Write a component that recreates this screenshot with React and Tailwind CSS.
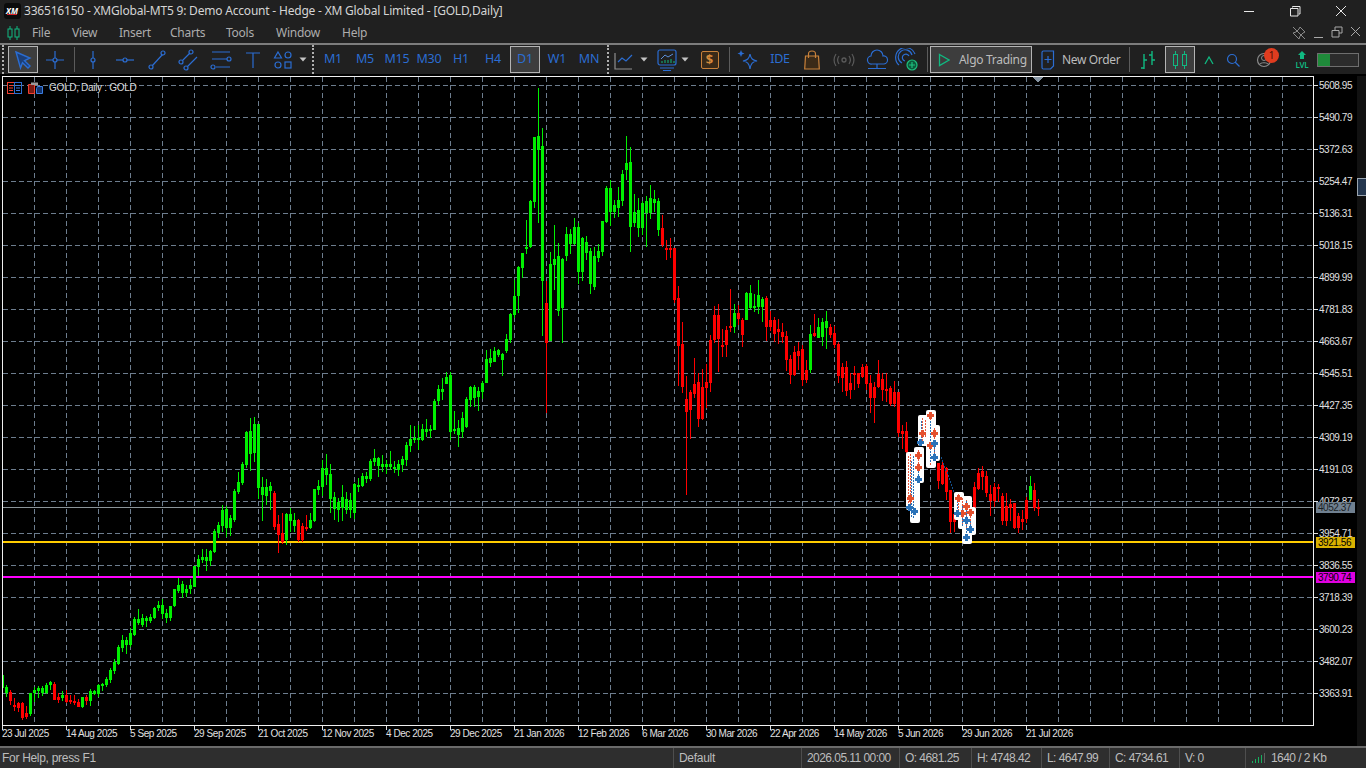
import React from "react";

const Z10 = "g825,825,865,865 g855,862,880,892 r870,876,904,915 r895,915,922,933 r905,910,923,937 r905,908,954,960 r918,940,951,957 g880,880,942,948 g862,870,880,905 g857,864,874,893 g858,864,879,888 g850,855,880,882 g843,846,856,870 r846,852,900,900 r880,892,900,910 g873,885,895,902 r870,885,906,910 r885,900,906,912 r885,904,910,916 r897,905,920,922 g890,892,921,924 r885,891,904,915 g868,874,903,918 g870,873,882,885 g853,855,881,892 g850,853,856,873 g830,836,856,862 g805,810,840,850 g778,786,813,822 g735,741,793,796 g705,720,745,755 g712,720,736,762 g685,699,736,740 g652,657,705,707 g628,657,669,675 g643,654,674,680 g648,654,663,682 g643,652,664,668 g620,624,654,658 g604,615,625,633 g597,615,642,656 g628,639,654,668 g617,618,654,662 g567,567,618,620 g533,555,574,578 g543,552,578,593 g555,568,580,592 g537,555,568,582 g497,498,560,562 g465,477,500,527 g447,471,481,490 g447,471,484,513 g450,453,483,497 g388,393,457,459 g367,375,400,413 g316,330,378,396 g318,327,384,410 g346,354,384,407 g268,273,360,366 g216,246,276,283 g187,192,249,256 g94,96,196,205 g55,93,162,212 g52,72,158,186 g72,72,264,298 g232,261,285,362 g237,261,287,315 g247,258,274,330 r274,279,381,390 r345,372,405,458 r339,399,426,431 g340,342,420,434 g324,342,362,395 g339,360,378,397 r357,360,420,425 r370,378,420,425 r345,381,387,392 g338,360,384,387 g267,267,363,365 g240,258,270,285 g181,204,260,287 g162,204,225,255 g192,222,296,340 g276,291,327,360 g295,306,330,365";
const R1 = "g485,497,508,521 g492,499,510,514 g493,500,510,518 g483,484,513,519";
const Z11 = "g895,915,917,935 g880,888,918,920 g875,888,896,910 g838,843,898,903 g808,835,846,858 g830,833,858,890 g825,852,862,875 g840,853,862,882 g813,853,862,870 g843,862,868,880 g840,852,870,887 g828,837,855,875 g785,795,840,857 g735,777,798,815 g738,773,780,790 g735,773,778,810 g733,748,780,782 g717,747,756,772 g735,747,753,775 g657,663,750,750 g615,627,663,675 g595,627,636,660 g577,591,612,612 g575,585,756,780 g693,747,753,762 g720,744,765,800 g697,714,756,773 g652,657,741,745 g618,620,660,680 g615,620,654,680 g622,633,651,693 g603,609,636,657 g510,537,609,609 g507,534,549,561 g501,513,546,546 g507,510,525,530 g520,522,540,588 g462,477,513,520 g400,402,481,490 g300,348,405,415 g258,261,348,400 g219,219,264,295 g120,200,207,222 g60,63,200,203";
const R2 = "g137,137,202,208 g88,136,150,223 g128,146,281,336 r281,303,343,413 g252,264,341,341 g225,259,265,290 g243,256,311,316 g258,259,308,343 g227,234,256,261 g229,234,244,254 g218,227,244,245 g223,227,272,284 g237,238,272,281 g236,242,253,260 g248,251,284,294 g247,256,287,290 g244,251,258,262 g221,221,252,256 g186,188,222,223 g180,188,212,226 g200,205,212,218 g187,200,208,217 g170,174,201,206 g136,163,170,180 g147,162,227,252 g194,212,223,227 g198,210,228,237 g201,203,228,235 g196,201,213,247 g185,198,213,219 g190,199,203,212 g198,201,230,236 r215,228,245,247 r240,248,250,260 r238,248,249,258 r248,248,300,303 r286,298,346,386 r322,344,387,393 r376,399,412,495 r390,392,410,439 r358,384,394,398 r373,382,419,427 r369,387,419,420 r364,382,388,408 r335,340,383,392 r306,315,340,343 r304,315,339,372 r329,345,346,357 r326,330,345,357 r289,326,327,332 g304,313,327,333 r305,313,319,325 r318,320,335,347 g292,293,320,320 g285,293,308,309 g294,306,308,312 g280,295,307,314 g297,299,307,322 r296,298,327,341 r311,320,327,331 r317,320,334,342 r319,329,332,344 r323,332,337,343 r331,336,360,371 r355,359,375,384 r346,352,375,376 r342,351,356,370 r345,349,380,386 r360,370,380,383 g325,334,370,373 r314,333,336,337 g318,327,338,338 g318,322,337,346 g311,321,328,349 r324,327,335,338 r326,333,345,348 r342,344,376,383 r363,367,378,392 r361,367,391,396 r373,383,390,399 r366,373,375,390 r373,373,384,388 r364,367,377,378 r364,366,384,390 r375,383,398,413 r382,387,398,423 r360,374,387,388 r373,379,390,401 r373,389,390,402 r386,388,404,406 r381,392,404,407 r392,392,433,437 r425,431,434,449 r422,431,452,455";
const R3 = "r463,463,481,489 r462,465,484,485 r467,468,492,500 r490,490,522,533 r505,514,522,532";
const R4 = "r482,487,510,511 r468,473,489,490 r466,471,477,490 r471,476,493,497 r485,494,501,516 r483,487,501,507 r484,487,489,502 r493,496,521,525 r493,506,521,526 r499,504,508,521 r503,503,528,529 r513,516,528,533 r510,519,522,530 r497,500,519,523 g476,486,500,500 r483,490,508,511 r499,507,509,516";

const parse = (s, x0, map) =>
  s.split(" ").map((e, i) => {
    const [h, t, b, l] = e.slice(1).split(",").map((v) => Math.round(map(Number(v))));
    return { g: e[0] === "g", x: x0 + 4 * i, h, t, b, l };
  });
const same = (v) => v;
const CANDLES = [
  ...parse(Z10, 2, (v) => 400 + v / 3),
  ...parse(R1, 342, same),
  ...parse(Z11, 358, (v) => 180 + v / 3),
  ...parse(R2, 534, same),
  ...parse(R3, 938, same),
  ...parse(R4, 974, same),
];

const GRID_X = Array.from({ length: 40 }, (_, i) => 34 + 32 * i);
const PRICES = ["5608.95","5490.79","5372.63","5254.47","5136.31","5018.15","4899.99","4781.83","4663.67","4545.51","4427.35","4309.19","4191.03","4072.87","3954.71","3836.55","3718.39","3600.23","3482.07","3363.91"];
const DATES = ["23 Jul 2025","14 Aug 2025","5 Sep 2025","29 Sep 2025","21 Oct 2025","12 Nov 2025","4 Dec 2025","29 Dec 2025","21 Jan 2026","12 Feb 2026","6 Mar 2026","30 Mar 2026","22 Apr 2026","14 May 2026","5 Jun 2026","29 Jun 2026","21 Jul 2026"];
const GRID_Y = PRICES.map((_, i) => 85 + 32 * i);

const BLOBS = [[906,452,13,58],[910,478,10,45],[914,447,10,36],[918,415,10,31],[926,410,10,58],[930,425,10,36],[954,492,10,28],[958,496,14,33],[962,522,10,22],[966,507,10,28]];
const RED_X = [[918,455],[918,467],[922,433],[930,415],[934,433],[930,445],[910,498],[958,498],[962,513],[966,506],[970,512]];
const BLUE_X = [[914,511],[918,479],[920,442],[934,443],[934,457],[909,507],[957,513],[966,520],[970,529],[966,537]];
const RED_V = [[908,456,505],[910,454,505],[913,480,500],[918,450,478],[922,418,445],[925,420,440],[930,412,466],[934,428,460],[958,494,516],[962,498,525],[966,500,530],[970,510,530]];
const BLUE_V = [[911,460,518],[913,455,518],[918,470,482],[921,420,442],[930,420,462],[934,440,458],[957,500,516],[962,505,526],[966,500,540],[970,520,532]];

function Plus({ x, y, c }) {
  return (
    <g fill={c}>
      <rect x={x - 3} y={y - 1} width="7" height="3" />
      <rect x={x - 1} y={y - 3} width="3" height="7" />
    </g>
  );
}

function Chart() {
  return (
    <svg viewBox="3 77 1310 648" width="1310" height="648" shapeRendering="crispEdges" className="block">
      <rect x="3" y="77" width="1310" height="648" fill="#000" />
      {GRID_X.map((x) => (
        <line key={x} x1={x + 0.5} x2={x + 0.5} y1="77" y2="725" stroke="#6d7d8e" strokeDasharray="5 3" />
      ))}
      {GRID_Y.map((y) => (
        <line key={y} x1="3" x2="1313" y1={y + 0.5} y2={y + 0.5} stroke="#6d7d8e" strokeDasharray="5 3" />
      ))}
      <rect x="3" y="507" width="1310" height="1" fill="#8a9499" />
      <rect x="3" y="541" width="1310" height="2" fill="#ffcc00" />
      <rect x="3" y="576" width="1310" height="2" fill="#ff00ff" />
      {CANDLES.map((c, i) => {
        const col = c.g ? "#00f000" : "#ff0000";
        return (
          <g key={i} fill={col}>
            <rect x={c.x} y={c.h} width="1" height={Math.max(1, c.l - c.h)} />
            <rect x={c.x - 1} y={c.t} width="3" height={Math.max(2, c.b - c.t)} />
          </g>
        );
      })}
      {Array.from({ length: 15 }, (_, i) => (
        <rect key={i} x={941 + Math.round(i * 1.1)} y={457 + i * 3} width="1" height="2" fill="#14508c" />
      ))}
      {BLOBS.map(([x, y, w, h], i) => (
        <rect key={i} x={x} y={y} width={w} height={h} rx="2" fill="#fff" shapeRendering="auto" />
      ))}
      {RED_V.map(([x, a, b], i) =>
        Array.from({ length: Math.floor((b - a) / 3) }, (_, j) => (
          <rect key={`${i}-${j}`} x={x} y={a + j * 3} width="1" height="2" fill="#e8563a" />
        ))
      )}
      {BLUE_V.map(([x, a, b], i) =>
        Array.from({ length: Math.floor((b - a) / 3) }, (_, j) => (
          <rect key={`${i}-${j}`} x={x} y={a + j * 3 + 1} width="1" height="2" fill="#2a72b8" />
        ))
      )}
      {RED_X.map(([x, y], i) => <Plus key={i} x={x} y={y} c="#e4502e" />)}
      {BLUE_X.map(([x, y], i) => <Plus key={i} x={x} y={y} c="#2a72b8" />)}
      <polygon points="1032,77 1044,77 1038,82" fill="#8795a3" />
    </svg>
  );
}

const BLUE = "#2b6dd2";
const TEAL = "#10b981";
const ORANGE = "#c8813a";

function Svg({ w = 24, h = 24, children, className = "" }) {
  return (
    <svg width={w} height={h} viewBox={`0 0 ${w} ${h}`} fill="none" className={className}>
      {children}
    </svg>
  );
}

const Tool = ({ w, selected, children, className = "" }) => (
  <div style={{ width: w }} className={`h-full flex items-center justify-center shrink-0 ${className}`}>
    {selected ? (
      <div className="w-[30px] h-[27px] border border-[#b4b4b4] bg-[#3d3d3d] flex items-center justify-center">{children}</div>
    ) : (
      children
    )}
  </div>
);

const Drop = () => (
  <svg width="8" height="5" viewBox="0 0 8 5"><path d="M0.5 0.5h7L4 4.5z" fill="#c4c4c4" /></svg>
);
const DotSep = () => (
  <div className="h-[29px] w-[2px] border-l-2 border-dotted border-[#b0b0b0]" />
);
const Divider = () => <div className="h-[25px] w-px bg-[#5c5c5c] shrink-0" />;

const TF = ({ label, selected }) => (
  <Tool w={32} selected={selected}>
    <span className="text-[12.5px] tracking-[-0.2px] text-[#2b6dd2]">{label}</span>
  </Tool>
);

function Node({ x, y }) {
  return <circle cx={x} cy={y} r="2" stroke={BLUE} strokeWidth="1.2" fill="#202020" />;
}
const L = (p) => ({ stroke: BLUE, strokeWidth: 1.2, ...p });

const MENU = [["File", 40], ["View", 47], ["Insert", 51], ["Charts", 56], ["Tools", 50], ["Window", 66], ["Help", 40]];

const STATUS = [
  ["Default", 128, "tracking-[-0.3px]"],
  ["2026.05.11 00:00", 98, ""],
  ["O: 4681.25", 72, ""],
  ["H: 4748.42", 70, ""],
  ["L: 4647.99", 68, ""],
  ["C: 4734.61", 70, ""],
  ["V: 0", 66, ""],
];

export default function App() {
  return (
    <div className="w-[1366px] h-[768px] overflow-hidden flex flex-col bg-[#202020] text-[12px] font-['Noto_Sans','Open_Sans',sans-serif] text-[#c4c4c4] select-none">
      {/* Title bar */}
      <div className="h-[22px] flex items-center shrink-0">
        <div className="w-[24px] flex justify-center">
          <div className="w-[17px] h-[16px] rounded-[3px] bg-[#0b0b0b] flex flex-col items-center justify-center">
            <span className="text-[8px] leading-[7px] italic font-bold text-white">XM</span>
            <div className="w-[10px] h-px bg-[#d8262c]" />
          </div>
        </div>
        <span className="text-[#d4d4d4] tracking-[-0.2px] whitespace-nowrap">336516150 - XMGlobal-MT5 9: Demo Account - Hedge - XM Global Limited - [GOLD,Daily]</span>
        <div className="ml-auto flex pr-[2px] h-full">
          <div className="w-[46px] flex items-center justify-center">
            <Svg w={12} h={12}><path d="M1 6.5h10" stroke="#e8e8e8" /></Svg>
          </div>
          <div className="w-[46px] flex items-center justify-center">
            <Svg w={12} h={12}><path d="M3.5 2.5V1.5h7.5v7.5h-1.2M1.5 3.5h7.5v7.5h-7.5z" stroke="#e8e8e8" /></Svg>
          </div>
          <div className="w-[46px] flex items-center justify-center">
            <Svg w={12} h={12}><path d="M1 1l10 10M11 1L1 11" stroke="#e8e8e8" /></Svg>
          </div>
        </div>
      </div>
      {/* Menu bar */}
      <div className="h-[21px] flex items-center shrink-0">
        <div className="w-[32px] flex justify-center pr-[6px]">
          <Svg w={13} h={14}>
            <path d="M3 0v14M10 0v14" stroke={TEAL} />
            <rect x="1" y="3" width="4" height="8" fill="#202020" stroke={TEAL} />
            <rect x="8" y="3" width="4" height="8" fill="#202020" stroke={TEAL} />
          </Svg>
        </div>
        {MENU.map(([m, w]) => (
          <div key={m} style={{ width: w }} className="text-[#adadad] text-[12px] tracking-[-0.25px]">{m}</div>
        ))}
        <div className="ml-auto flex pr-[1px]">
          <div className="w-[19px] flex justify-center">
            <Svg w={14} h={14}><path d="M8 1l5 5-2 1-3 3-1 3-6-6 3-1 3-3zM1 1l12 12" stroke="#8a8a8a" /></Svg>
          </div>
          <div className="w-[19px] flex justify-center">
            <Svg w={12} h={14}><path d="M2 11.5h9" stroke="#a8a8a8" /></Svg>
          </div>
          <div className="w-[19px] flex justify-center">
            <Svg w={12} h={12}><path d="M4 4V1h7v6H8M1 4.5h7v6.5H1z" stroke="#a8a8a8" /></Svg>
          </div>
          <div className="w-[19px] flex justify-center">
            <Svg w={11} h={11}><path d="M1 1l9 9M10 1l-9 9" stroke="#a8a8a8" /></Svg>
          </div>
        </div>
      </div>
      <div className="h-[2px] bg-[#7d7d7d] shrink-0" />
      {/* Toolbar */}
      <div className="h-[29px] flex items-center shrink-0 pl-[2px]">
        <DotSep />
        <div className="w-[3px]" />
        <Tool w={32} selected>
          <Svg>
            <path d="M5 4l14 6-5.500 2.700 5.500 5.300-2 2-5.500-5.200L9.500 20z" fill="#1c3f78" stroke={BLUE} strokeWidth="1.4" />
          </Svg>
        </Tool>
        <Tool w={32}>
          <Svg>
            <path d="M3 12h18M12 3v18" {...L()} /><Node x={12} y={12} />
          </Svg>
        </Tool>
        <Tool w={6}><Divider /></Tool>
        <Tool w={32}><Svg><path d="M12 3v18" {...L()} /><Node x={12} y={12} /></Svg></Tool>
        <Tool w={32}><Svg><path d="M3 12h18" {...L()} /><Node x={12} y={12} /></Svg></Tool>
        <Tool w={32}><Svg><path d="M7 18L18 6" {...L()} /><Node x={6} y={19} /><Node x={18} y={5} /></Svg></Tool>
        <Tool w={32}><Svg><path d="M5 13l8-8M9 20l11-11" {...L()} /><Node x={4} y={14} /><Node x={14} y={4} /><Node x={9} y={20} /></Svg></Tool>
        <Tool w={32}><Svg><path d="M3 4h18M3 11h15M7 19h14" {...L()} /><Node x={20} y={11} /><Node x={4} y={19} /></Svg></Tool>
        <Tool w={32}><Svg><path d="M5 5h14M12 5v15" {...L()} /></Svg></Tool>
        <Tool w={28}>
          <Svg>
            <path d="M7 4l3.500 6h-7z" {...L()} /><circle cx="17" cy="7" r="3" {...L()} /><circle cx="7" cy="17" r="3" {...L()} /><rect x="14" y="14" width="6" height="6" {...L()} />
          </Svg>
        </Tool>
        <Tool w={12}><Drop /></Tool>
        <Tool w={8}><DotSep /></Tool>
        <TF label="M1" /><TF label="M5" /><TF label="M15" /><TF label="M30" /><TF label="H1" /><TF label="H4" /><TF label="D1" selected /><TF label="W1" /><TF label="MN" />
        <Tool w={5}><DotSep /></Tool>
        <Tool w={28}>
          <Svg>
            <path d="M3 5v16h17" stroke="#8f8f8f" strokeWidth="1.2" />
            <path d="M6 14l4-4 4 3 6-6" {...L()} />
          </Svg>
        </Tool>
        <Tool w={12}><Drop /></Tool>
        <Tool w={30} className="pl-[4px]">
          <Svg>
            <rect x="3" y="2" width="18" height="15" rx="2" {...L()} />
            <path d="M6 11l4-4 3 2 5-3" stroke="#5b8ed8" />
            <path d="M7 15v-2M10 15v-3M13 15v-3M16 15v-4M19 15v-2" stroke={TEAL} />
            <path d="M5 20h14M8 22.500h8" {...L()} />
          </Svg>
        </Tool>
        <Tool w={10}><Drop /></Tool>
        <Tool w={39}>
          <div className="w-[18px] h-[18px] rounded-[2px] border border-[#c8813a] bg-[#3a2a18] flex items-center justify-center text-[13px] leading-none text-[#d58a3c] font-bold">$</div>
        </Tool>
        <Divider />
        <Tool w={36}>
          <Svg>
            <path d="M14 6c1 5 2.500 6 7 7-4.500 1-6 2-7 8-1-6-2.500-7-7-8 4.500-1 6-2 7-7z" {...L()} />
            <path d="M5 2l1 2.500 2.500 1-2.500 1-1 2.500-1-2.500-2.500-1 2.500-1z" fill={BLUE} />
          </Svg>
        </Tool>
        <Tool w={28}><span className="text-[12.5px] tracking-[-0.3px] text-[#2b6dd2]">IDE</span></Tool>
        <Tool w={36}>
          <Svg w={16} h={20}>
            <path d="M1.500 6h13l.8 13H.7z" stroke={ORANGE} strokeWidth="1.2" fill="#3a2a18" />
            <path d="M4.500 8V4a3.500 3 0 017 0v4" stroke={ORANGE} strokeWidth="1.2" />
          </Svg>
        </Tool>
        <Tool w={28}>
          <Svg>
            <circle cx="12" cy="12" r="2" stroke="#5a5a5a" strokeWidth="1.300" />
            <path d="M7 8a7 7 0 000 8M17 8a7 7 0 010 8M4 6a11 11 0 000 12M20 6a11 11 0 010 12" stroke="#5a5a5a" strokeWidth="1.200" />
          </Svg>
        </Tool>
        <Tool w={37}>
          <Svg>
            <path d="M7 16a4 4 0 01-1-8 6 6 0 0112 0 4 4 0 011 8z" {...L()} />
            <path d="M12 16v5M3 20.500h18" {...L()} />
          </Svg>
        </Tool>
        <Tool w={24}>
          <Svg>
            <path d="M4 17a10 10 0 1116-11M7 15a7 7 0 1110-8M10 13a3.500 3.500 0 114-5" {...L()} />
            <circle cx="17" cy="17" r="5" fill="#0c5a3c" stroke="#1ec07e" strokeWidth="1.200" />
            <path d="M14 17h6M17 14v6" stroke="#1ec07e" strokeWidth="1.200" />
          </Svg>
        </Tool>
        <div className="w-[8px]" />
        <Divider />
        <div className="w-[2px]" />
        <div className="w-[102px] h-[27px] border border-[#b4b4b4] bg-[#3d3d3d] flex items-center pl-[7px] gap-[9px] shrink-0">
          <Svg w={12} h={14}><path d="M1.500 1.500l9.500 5.500-9.500 5.500z" stroke={TEAL} strokeWidth="1.300" /></Svg>
          <span className="text-[12px] tracking-[-0.3px] text-[#bcbcbc] whitespace-nowrap">Algo Trading</span>
        </div>
        <div className="flex items-center h-full pl-[9px] w-[97px] shrink-0 gap-[7px]">
          <Svg w={14} h={20}>
            <path d="M2.500 1h10v15l-3 3h-7a1.500 1.500 0 01-1.500-1.500v-15A1.500 1.500 0 012.500 1zM7 6v7M3.500 9.500h7" {...L()} />
          </Svg>
          <span className="text-[12px] tracking-[-0.35px] text-[#bcbcbc] whitespace-nowrap">New Order</span>
        </div>
        <Divider />
        <Tool w={35}>
          <Svg>
            <path d="M8 6v15M5 20h3M8 12h3M16 3v14M13 7h3M16 12h3" stroke={TEAL} strokeWidth="1.400" />
          </Svg>
        </Tool>
        <Tool w={30} selected>
          <Svg w={18} h={20}>
            <path d="M4.500 1v18M13.500 1v18" stroke={TEAL} />
            <rect x="2.500" y="4.500" width="4" height="11" fill="#3d3d3d" stroke={TEAL} />
            <rect x="11.500" y="4.500" width="4" height="11" fill="#3d3d3d" stroke={TEAL} />
          </Svg>
        </Tool>
        <Tool w={27}><Svg w={10} h={10}><path d="M1 9l4-7 4 7" stroke={TEAL} strokeWidth="1.300" /></Svg></Tool>
        <Tool w={21}>
          <Svg w={14} h={14}><circle cx="6" cy="6" r="4.500" {...L()} /><path d="M9 9l4.500 4.500" {...L()} /></Svg>
        </Tool>
        <div className="w-[48px] h-full flex items-center justify-center relative shrink-0 pr-[6px]">
          <Svg w={16} h={16}>
            <circle cx="8" cy="8" r="6.500" stroke="#8a8a8a" strokeWidth="1.200" />
            <circle cx="8" cy="6" r="2.500" stroke="#8a8a8a" />
            <path d="M3 13c1-3 9-3 10 0" stroke="#8a8a8a" />
          </Svg>
          <span className="absolute left-[21px] top-[3px] w-[15px] h-[15px] rounded-full bg-[#e03c1f] text-[10px] leading-[15px] text-center text-[#4a0e05]">1</span>
        </div>
        <div className="w-[22px] h-full flex flex-col items-center justify-center shrink-0 text-[#10b981]">
          <Svg w={10} h={9}><path d="M5 0l4 4H7v4H3V4H1z" fill={TEAL} /></Svg>
          <span className="text-[8px] leading-[9px] tracking-[-0.2px] font-semibold">LVL</span>
        </div>
        <div className="w-[42px] h-[14px] border border-[#6e6e6e] bg-[#2c2c2c] shrink-0 ml-[4px] flex">
          <div className="w-[12px] bg-[#1f8a3a]" />
        </div>
      </div>
      {/* Chart zone */}
      <div className="h-[672px] bg-black shrink-0 pt-[2px] flex font-['Liberation_Sans',sans-serif] text-[10px] tracking-[-0.45px] text-[#e0e0e0]">
        <div className="w-[1357px] shrink-0">
          <div className="flex h-[650px]">
            <div className="ml-[2px] w-[1312px] h-[650px] border border-[#f0f0f0] relative shrink-0">
              <Chart />
              <div className="absolute left-[4px] top-[5px] flex items-center">
                <Svg w={16} h={12}>
                  <rect x="0.500" y="0.500" width="7" height="11" stroke="#f04030" />
                  <rect x="7.500" y="0.500" width="7" height="11" stroke="#2b6dd2" />
                  <path d="M2 3.500h4M2 6h4M2 8.500h4" stroke="#f04030" />
                  <path d="M9 3.500h4M9 6h4M9 8.500h4" stroke="#3b7de2" />
                </Svg>
                <Svg w={16} h={12} className="ml-[5px]">
                  <path d="M0.500 2.500h6v9h-6z" stroke="#f04030" fill="#7a1a14" />
                  <path d="M9.500 4.500h5v7h-6v-5z" stroke="#3b7de2" fill="#14346a" />
                  <path d="M3 0.500h7v2.500h-7z" fill="#9a9a9a" />
                </Svg>
                <span className="ml-[5px] text-[10px] tracking-[-0.3px] text-[#dcdcdc] leading-none whitespace-nowrap">GOLD, Daily : GOLD</span>
              </div>
              <div className="absolute left-[1313px] top-[425px] w-[39px] h-[11px] bg-[#708090] text-[#1a1f24] leading-[11px] pl-[2px]">4052.37</div>
              <div className="absolute left-[1313px] top-[460px] w-[39px] h-[11px] bg-[#d9b100] text-black leading-[11px] pl-[2px]">3921.56</div>
              <div className="absolute left-[1313px] top-[495px] w-[39px] h-[11px] bg-[#e000e0] text-black leading-[11px] pl-[2px]">3790.74</div>
            </div>
            <div className="flex flex-col -mt-[7px]">
              {PRICES.map((p) => (
                <div key={p} className="h-[32px] flex items-center shrink-0">
                  <div className="w-[4px] h-px bg-[#e0e0e0]" />
                  <span className="ml-px">{p}</span>
                </div>
              ))}
            </div>
          </div>
          <div className="flex ml-[2px]">
            {DATES.map((d) => (
              <div key={d} className="w-[64px] shrink-0">
                <div className="w-px h-[4px] bg-[#e0e0e0]" />
                <div className="leading-[12px] -mt-[2px] whitespace-nowrap">{d}</div>
              </div>
            ))}
          </div>
        </div>
        <div className="w-[9px] h-full bg-[#111111] shrink-0 pt-[102px]">
          <div className="w-[9px] h-[18px] border border-[#9aa5b0] border-r-0 bg-[#24364e]" />
        </div>
      </div>
      <div className="h-[2px] bg-[#6a6a6a] shrink-0" />
      {/* Status bar */}
      <div className="h-[20px] bg-[#2e2e2e] flex items-center shrink-0 font-['Liberation_Sans',sans-serif] text-[12px] tracking-[-0.55px] text-[#bdbdbd]">
        <div className="w-[673px] pl-[2px] shrink-0 tracking-[-0.3px]">For Help, press F1</div>
        {STATUS.map(([t, w, c]) => (
          <div key={t} style={{ width: w }} className={`h-full border-l border-[#4e4e4e] pl-[5px] flex items-center shrink-0 whitespace-nowrap ${c}`}>{t}</div>
        ))}
        <div className="h-full border-l border-[#4e4e4e] pl-[5px] flex items-center gap-[6px] whitespace-nowrap">
          <Svg w={14} h={12}>
            <path d="M1.500 11v-2M4.500 11v-4M7.500 11v-6M10.500 11v-8" stroke="#16b060" />
            <path d="M13.500 11v-10" stroke="#5e5e5e" />
          </Svg>
          <span>1640 / 2 Kb</span>
        </div>
      </div>
    </div>
  );
}
